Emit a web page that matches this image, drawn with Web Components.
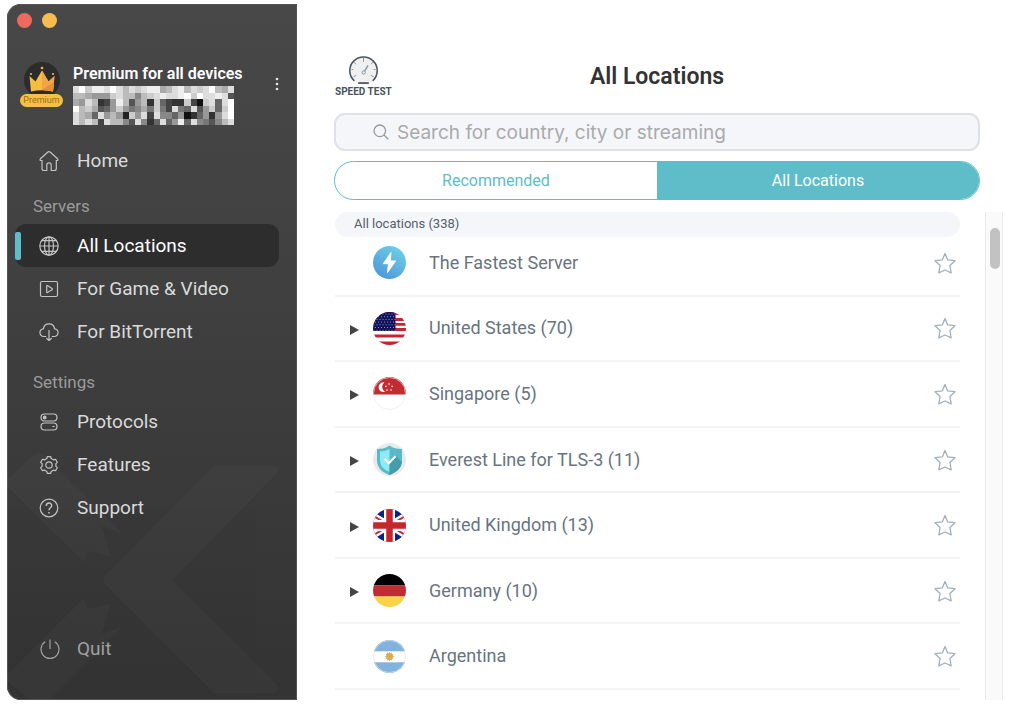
<!DOCTYPE html>
<html lang="en">
<head>
<meta charset="utf-8">
<meta name="viewport" content="width=device-width, initial-scale=1">
<title>All Locations</title>
<style>
  body { margin: 0; background: #fff; font-family: Roboto, "Liberation Sans", sans-serif; }
</style>
</head>
<body>
<vpn-window>
  <side-bar slot="side">
    <account-card slot="account" plan="Premium for all devices" badge="Premium"></account-card>
    <nav-item icon="home">Home</nav-item>
    <nav-section label="Servers">
      <nav-item icon="globe" active>All Locations</nav-item>
      <nav-item icon="play">For Game &amp; Video</nav-item>
      <nav-item icon="cloud">For BitTorrent</nav-item>
    </nav-section>
    <nav-section label="Settings" spaced>
      <nav-item icon="toggles">Protocols</nav-item>
      <nav-item icon="gear">Features</nav-item>
      <nav-item icon="help">Support</nav-item>
    </nav-section>
    <nav-item slot="foot" icon="power" muted>Quit</nav-item>
  </side-bar>
  <page-header>All Locations</page-header>
  <search-box placeholder="Search for country, city or streaming"></search-box>
  <tab-switch></tab-switch>
  <location-list label="All locations (338)">
    <location-row flag="bolt">The Fastest Server</location-row>
    <location-row flag="us" expandable>United States (70)</location-row>
    <location-row flag="sg" expandable>Singapore (5)</location-row>
    <location-row flag="shield" expandable>Everest Line for TLS-3 (11)</location-row>
    <location-row flag="gb" expandable>United Kingdom (13)</location-row>
    <location-row flag="de" expandable>Germany (10)</location-row>
    <location-row flag="ar">Argentina</location-row>
  </location-list>
</vpn-window>

<script>
const reset = `*{box-sizing:border-box} button{font:inherit;color:inherit;background:none;border:0;padding:0;margin:0;cursor:pointer} svg{display:block}`;

function define(name, render, setup) {
  customElements.define(name, class extends HTMLElement {
    constructor() { super(); this.attachShadow({ mode: 'open' }); }
    connectedCallback() {
      const [css, html] = render(this);
      this.shadowRoot.innerHTML = `<style>${reset}${css}</style>${html}`;
      if (setup) setup(this);
    }
  });
}

const icons = {
  home: '<path d="M4 10.500H3.200C1.800 10.500 1.600 9.600 2.400 8.800L9.600 2.200Q11 1 12.400 2.200L19.600 8.800C20.400 9.600 20.200 10.500 18.800 10.500H18.300V18.500Q18.300 20.500 16.300 20.500H13.200V14.800Q13.200 12.800 11 12.800T8.800 14.800V20.500H6Q4 20.500 4 18.500Z"/>',
  globe: '<circle cx="11" cy="11" r="9.200"/><ellipse cx="11" cy="11" rx="4.500" ry="9.200"/><path d="M1.800 11H20.200M11 1.800V20.200M3.500 5.700H18.500M3.500 16.300H18.500" />',
  play: '<rect x="2.500" y="3.500" width="17" height="15" rx="1.500"/><path d="M8.700 7.900V14.200Q8.700 14.900 9.400 14.500L14.100 11.700Q14.900 11.100 14.100 10.500L9.400 7.600Q8.700 7.200 8.700 7.900Z"/>',
  cloud: '<path d="M8.300 15.500H6C0.600 15 0.800 8.400 5.400 7.800C6.400 1.200 15.600 1.200 16.600 7.800C21.200 8.400 21.400 15 16 15.500H13.700M11 9V19.300M8.300 17.200L11 19.500L13.700 17.200"/>',
  toggles: '<rect x="3" y="3" width="16" height="7" rx="3.500"/><circle cx="6.700" cy="6.500" r="1.300" fill="currentColor"/><rect x="3" y="12" width="16" height="7" rx="3.500"/><path d="M14.500 15.500H16.500"/>',
  gear: '<circle cx="11" cy="11" r="3.200"/><path d="M8.800 4.500L9.300 2.700H12.700L13.200 4.500L15.600 5.900L17.500 5.300L19.300 8.300L17.900 9.700V12.300L19.300 13.700L17.500 16.700L15.600 16.100L13.200 17.500L12.700 19.300H9.300L8.800 17.500L6.400 16.100L4.500 16.700L2.700 13.700L4.100 12.300V9.700L2.700 8.300L4.500 5.300L6.400 5.900Z" stroke-linejoin="round"/>',
  help: '<circle cx="11" cy="11" r="8.800"/><path d="M8.300 9C8.300 5 13.700 5.200 13.700 8.700C13.700 10.800 11 10.600 11 13.200" stroke-width="1.400"/><path d="M11 15V16.400" stroke-width="1.500"/>',
  power: '<path d="M7.200 3.800A9 9 0 1 0 16.800 3.800M12 1.500V11"/>'
};

const usStars = Array.from({ length: 7 }, (_, r) => Array.from({ length: 8 }, (_, c) =>
  `<circle cx="${1 + c * 3 + (r % 2) * 1.5}" cy="${2 + r * 2.7}" r=".5" fill="#b9bcd9"/>`).join('')).join('');
const rays = Array.from({ length: 12 }, (_, i) => `<path d="M16.500 16.500V12.300" transform="rotate(${i * 30} 16.500 16.500)" stroke="#d9a24c" stroke-width="1"/>`).join('');

const flags = {
  bolt: '<defs><linearGradient id="b" x1=".8" y1="0" x2=".2" y2="1"><stop stop-color="#6fd0e6"/><stop offset="1" stop-color="#4d95db"/></linearGradient></defs><rect width="33" height="33" fill="url(#b)"/><path d="M18 6.500L10.300 17.700H15.500L14.500 26.500L22.700 15H17.300Z" fill="#fff" stroke="#fff" stroke-linejoin="round"/>',
  us: `<rect width="33" height="33" fill="#fff"/><path d="M0 0H33V3H0ZM0 6H33V9H0ZM0 11H33V13.700H0ZM0 16H33V19H0ZM0 22.500H33V25.500H0ZM0 29.500H33V33H0Z" fill="#c4262f"/><rect width="22.500" height="19" fill="#10125c"/>${usStars}`,
  sg: '<rect width="33" height="33" fill="#fff"/><rect width="33" height="17.500" fill="#c12c32"/><path d="M11.500 5.500A4.800 4.800 0 1 0 12 14.700A5.400 5.400 0 0 1 11.500 5.500Z" fill="#fff"/><g fill="#fff"><circle cx="16" cy="7" r=".8"/><circle cx="12.900" cy="9.400" r=".8"/><circle cx="19.100" cy="9.400" r=".8"/><circle cx="14" cy="13" r=".8"/><circle cx="18" cy="13" r=".8"/></g><circle cx="16.500" cy="16.500" r="16" fill="none" stroke="#e8e8e8" stroke-width=".7"/>',
  shield: '<rect width="33" height="33" fill="#e9e9e9"/><path d="M16.500 2.500Q21 6 29 6V17C29 26 22 30 16.500 32C11 30 4 26 4 17V6Q12 6 16.500 2.500Z" fill="#59bac7"/><path d="M16.500 6Q12 8.500 7 8.600V17C7 23.500 11 26.500 16.500 28.800Z" fill="#8eeaf3"/><path d="M16.500 20L22.500 13L29 19C28 27 21 30 16.500 32Z" fill="#469ca9"/><path d="M11.500 16L15.800 20.300L22.500 13.300" fill="none" stroke="#fff" stroke-width="2"/>',
  gb: '<rect width="33" height="33" fill="#0b2484"/><path d="M-6 3L39 30M-6 30L39 3" stroke="#fff" stroke-width="6.500"/><path d="M-6 3L39 30M-6 30L39 3" stroke="#c8262f" stroke-width="2"/><path d="M16.500 0V33M0 16.500H33" stroke="#fff" stroke-width="11"/><path d="M16.500 0V33M0 16.500H33" stroke="#c8262f" stroke-width="6.500"/>',
  de: '<rect width="33" height="11.500" fill="#000"/><rect y="11.500" width="33" height="11" fill="#c12c32"/><rect y="22.500" width="33" height="11" fill="#f9d348"/>',
  ar: `<rect width="33" height="33" fill="#fff"/><rect width="33" height="11.300" fill="#81b3de"/><rect y="22.300" width="33" height="11" fill="#81b3de"/>${rays}<circle cx="16.500" cy="16.500" r="3.400" fill="#dcaa55"/><circle cx="16.500" cy="16.500" r="16" fill="none" stroke="#e3e3e3" stroke-width=".7"/>`
};

define('vpn-window', () => [`
  :host{display:flex;min-height:100vh;box-sizing:border-box;padding:4px 0 15px 7px}
  main{flex:1;min-width:0;display:flex;flex-direction:column;padding:52px 44px 0 37px}
`, `<slot name="side"></slot><main><slot></slot></main>`]);

define('side-bar', () => [`
  :host{position:relative;display:flex;flex-direction:column;flex:none;width:290px;box-sizing:border-box;padding:9px 18px 30px 8px;
    border-radius:14px 0 0 14px;overflow:hidden;background:linear-gradient(#484848,#404040 40%,#333);box-shadow:inset 0 0 0 1px #555}
  .mark{position:absolute;left:0;bottom:0;z-index:0;fill:#fff;opacity:.018}
  .lights{display:flex;gap:10px;padding-left:2px}
  .lights button{width:15px;height:15px;border-radius:50%;background:#ee6a5f}
  .lights .min{background:#f5bd4f}
  nav{position:relative;display:flex;flex-direction:column;flex:1}
  .foot{margin-top:auto}
`, `<svg class="mark" width="290" height="250" viewBox="7 450 290 250" aria-hidden="true">
    <path d="M214 466H272Q282 466 276 474L172 580L276 684Q280 693 272 693H214L106 585Q101 580 106 575Z"/>
    <path d="M7 486V480L32 456Q38 450 45 456L122 533L101 526L111 556L87 551L84 562Z"/>
    <path d="M84 598L87 609L111 604L101 634L122 627L50 699H30L7 681V675Z"/></svg>
  <div class="lights"><button aria-label="Close"></button><button class="min" aria-label="Minimise"></button></div>
  <slot name="account"></slot>
  <nav><slot></slot><div class="foot"><slot name="foot"></slot></div></nav>`]);

/* Greyscale levels, one hex digit per cell, that hide the account name. */
const mosaic = [
  'dfceedfdbdcdeeabdebdcdfbad',
  'bba999cdbb8bcdeddefcfdded5',
  'a9db349eb59b3c6433c41cd6df',
  'fbca569c978a7c74d76d59c6cf',
  'dba6d9b92c9d4d8869136939df',
  'dbdb4dbb85d836d69e6d8758bd'
].map((row, y) => [...row].map((v, x) => `<rect x="${x}" y="${y}" width="1" height="1" fill="#${v}${v}${v}"/>`).join('')).join('');

define('account-card', el => [`
  :host{display:flex;align-items:flex-start;padding:34px 0 0 5px;height:111px;box-sizing:border-box;position:relative}
  .avatar{flex:none;width:43px;margin-right:10px;display:flex;flex-direction:column;align-items:center}
  .badge{width:43px;height:13px;margin-top:-5px;border-radius:7px;background:#f5c045;color:#a06c1c;font-size:9px;line-height:13px;text-align:center}
  .info{flex:1;padding-top:2px}
  h2{margin:0 0 2px;font-size:16px;line-height:20px;font-weight:600;color:#fff;white-space:nowrap}
  button{flex:none;margin:15px 0 0;width:4px;height:14px}
`, `<div class="avatar"><svg width="38" height="37" viewBox="0 0 38 37" aria-hidden="true">
      <circle cx="19" cy="18" r="18" fill="#2c2c2c"/>
      <path d="M6.500 14L12.500 19.500L19 8.500L25.500 19.500L31.500 14L30 29.500Q19 27 8 29.500Z" fill="#f7bd3f"/>
      <path d="M19 8.500L25.500 19.500L31.500 14L30 29.500Q25 28 19 28Z" fill="#f0a743"/>
      <path d="M19 28L31 20L30 29.500Q25 28 19 28Z" fill="#e98d37"/>
      <g fill="#f2b34a"><circle cx="19" cy="6" r="1.300"/><circle cx="8" cy="12" r="1.100"/><circle cx="30" cy="12" r="1.100"/></g></svg>
    <span class="badge">${el.getAttribute('badge')}</span></div>
  <div class="info"><h2>${el.getAttribute('plan')}</h2>
    <svg width="161" height="39" viewBox="0 0 26 6" preserveAspectRatio="none" shape-rendering="crispEdges" aria-hidden="true">${mosaic}</svg></div>
  <button aria-label="More"><svg width="4" height="14" viewBox="0 0 4 14" fill="#e8e8e8"><circle cx="2" cy="2" r="1.300"/><circle cx="2" cy="7" r="1.300"/><circle cx="2" cy="12" r="1.300"/></svg></button>`]);

define('nav-section', el => [`
  :host{display:block;padding-top:14px}
  :host([spaced]){padding-top:19px}
  h3{margin:0 0 8px;padding-left:18px;font-size:17px;line-height:20px;font-weight:400;color:#9b9b9b}
`, `<h3>${el.getAttribute('label')}</h3><slot></slot>`]);

define('nav-item', el => [`
  :host{display:block}
  a{position:relative;display:flex;align-items:center;gap:17px;height:43px;padding-left:23px;border-radius:11px;color:#dadada;text-decoration:none;font-size:19px;line-height:24px;white-space:nowrap}
  svg{flex:none;fill:none;stroke:currentColor;stroke-width:1.200;color:#c4c4c4}
  :host([active]) a{background:#2d2d2d;color:#fff}
  :host([active]) a::before{content:"";position:absolute;left:0;top:8px;width:6px;height:28px;border-radius:2px;background:#5ebdc8}
  :host([muted]) a,:host([muted]) svg{color:#a0a0a0}
`, `<a href="#"><svg width="22" height="22" viewBox="0 0 22 22" aria-hidden="true">${icons[el.getAttribute('icon')]}</svg><span><slot></slot></span></a>`]);

define('page-header', () => [`
  :host{display:grid;grid-template-columns:1fr auto 1fr;height:57px}
  button{justify-self:start;display:flex;flex-direction:column;align-items:center;margin-left:1px;height:43px;color:#46545e;font-size:10px;line-height:14px;font-weight:700}
  h1{margin:6px 0 0;font-size:23px;line-height:30px;font-weight:600;color:#333;height:30px}
`, `<button><svg width="31" height="30" viewBox="0 0 31 30" fill="none" stroke="#4a5362" aria-hidden="true">
      <circle cx="15.500" cy="15.500" r="14" fill="#f0f0f1" stroke="none"/>
      <path d="M6 25.700A14.200 14.200 0 1 1 25 25.700" stroke-width="1.600"/><path d="M10 28H21" stroke-width="1.800"/>
      <path d="M15.500 2V6M5.800 6.500L7.800 8.500M25.200 6.500L23.200 8.500M3 14H5M28 14H26M5 21.500L8 20M26 21.500L23 20" stroke="#8b929c"/>
      <path d="M16.600 15.600L20.200 9.800" stroke="#8b929c" stroke-width="1.400"/><circle cx="15.700" cy="17" r="1.700" stroke="#8b929c"/></svg>
    <span>SPEED TEST</span></button><h1><slot></slot></h1>`]);

define('search-box', el => [`
  :host{display:block}
  label{display:flex;align-items:center;gap:8px;height:38px;padding-left:37px;border:2px solid #dfe1e8;border-radius:11px;background:#f5f6fa}
  svg{flex:none}
  input{flex:1;min-width:0;border:0;outline:0;padding:2px 0 0;background:none;font-family:Inter,"Liberation Sans",sans-serif;font-size:19px;line-height:24px;color:#333}
  input::placeholder{color:#aaa;opacity:1}
`, `<label><svg width="16" height="16" viewBox="0 0 16 16" fill="none" stroke="#999" stroke-width="1.300" aria-hidden="true"><circle cx="6.800" cy="6.800" r="5.800"/><path d="M11 11L15.300 15.300"/></svg>
  <input type="search" aria-label="Search" placeholder="${el.getAttribute('placeholder')}"></label>`]);

define('tab-switch', () => [`
  :host{display:block;margin-top:10px}
  div{display:flex;height:39px;border:1px solid #5ebdc8;border-radius:20px;overflow:hidden;background:#fff}
  button{flex:1;font-size:16px;line-height:20px;color:#5ebdc8}
  .on{background:#5ebdc8;color:#fff}
`, `<div role="tablist"><button role="tab" aria-selected="false">Recommended</button><button role="tab" class="on" aria-selected="true">All Locations</button></div>`]);

define('location-list', el => [`
  :host{flex:1;display:flex;margin:12px -23px 0 1px}
  section{flex:1;min-width:0;display:flex;flex-direction:column;margin-right:25px;padding-bottom:10px}
  h2{position:relative;z-index:1;margin:0 0 -6px;height:25px;padding-left:19px;border-radius:13px;background:#f5f6fa;font-size:13px;line-height:24px;font-weight:400;color:#53616c}
  .rows{flex:1;display:flex;flex-direction:column}
  .track{flex:none;width:18px;padding:16px 4px 0;background:#fafafa;border:solid #e9e9e9;border-width:0 1px}
  .thumb{width:10px;height:41px;border-radius:5px;background:#c2c2c2}
`, `<section><h2>${el.getAttribute('label')}</h2><div class="rows" role="list"><slot></slot></div></section><div class="track" aria-hidden="true"><div class="thumb"></div></div>`]);

define('location-row', el => [`
  :host{flex:1 0 64px;display:flex;align-items:center;box-sizing:border-box;padding:0 4px 0 15px;border-bottom:2px solid #f4f4f5}
  .caret{flex:none;width:9px;margin-right:14px;padding-top:2px}
  .flag{flex:none;border-radius:50%;margin-right:23px}
  .name{flex:1;font-size:18px;line-height:24px;color:#69747f}
  .star{flex:none}
`, `<div class="caret">${el.hasAttribute('expandable') ? '<button aria-label="Expand"><svg width="9" height="10" viewBox="0 0 9 10"><path d="M0 0L9 5L0 10Z" fill="#444"/></svg></button>' : ''}</div>
  <svg class="flag" width="33" height="33" viewBox="0 0 33 33" aria-hidden="true">${flags[el.getAttribute('flag')]}</svg>
  <span class="name"><slot></slot></span>
  <button class="star" aria-label="Add to favourites"><svg width="22" height="22" viewBox="0 0 22 22" fill="none" stroke="#a1b0bb" stroke-width="1.300" stroke-linejoin="round"><path d="M11 1.500L13.700 7.900L21 8.700L15.900 13.500L17.200 20.800L11 18L4.800 20.800L6.100 13.500L1 8.700L8.300 7.900Z"/></svg></button>`],
  el => el.setAttribute('role', 'listitem'));
</script>
</body>
</html>
